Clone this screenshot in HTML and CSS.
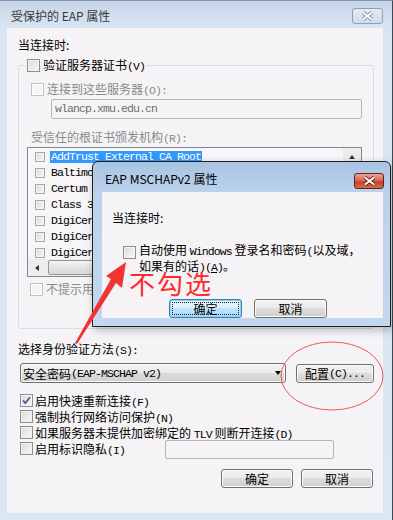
FILE: index.html
```html
<!DOCTYPE html>
<html lang="zh-CN">
<head>
    <meta charset="UTF-8">
    <meta name="viewport" content="width=device-width, initial-scale=1.0">
    <title>受保护的 EAP 属性</title>
    <link rel="stylesheet" href="styles.css">
</head>
<body>
    <div class="window">
        <div class="titlebar">
            <span class="title">受保护的 EAP 属性</span>
            <span class="close-btn inactive">
                <svg width="13" height="10" viewBox="0 0 13 10"><path d="M2 1.5 L11 8.5 M11 1.5 L2 8.5" stroke="#7c8da4" stroke-width="3.6"/><path d="M2 1.5 L11 8.5 M11 1.5 L2 8.5" stroke="#fff" stroke-width="2"/></svg>
            </span>
        </div>

        <div class="client">
            <div class="label">当连接时:</div>

            <fieldset class="group">
                <legend><span class="cb"></span><span>验证服务器证书<span class="m">(V)</span></span></legend>
                <div class="group-body">
                    <div class="row gray"><span class="cb off"></span><span>连接到这些服务器<span class="m">(O):</span></span></div>
                    <div class="textbox server m">wlancp.xmu.edu.cn</div>
                    <div class="label gray trusted">受信任的根证书颁发机构<span class="m">(R):</span></div>

                    <div class="list">
                        <div class="list-items">
                            <div class="item"><span class="cb sm"></span><span class="m selected">AddTrust External CA Root</span></div>
                            <div class="item"><span class="cb sm"></span><span class="m">Baltimore CyberTrust Root</span></div>
                            <div class="item"><span class="cb sm"></span><span class="m">Certum CA</span></div>
                            <div class="item"><span class="cb sm"></span><span class="m">Class 3 Public Primary Certification Authority</span></div>
                            <div class="item"><span class="cb sm"></span><span class="m">DigiCert Assured ID Root CA</span></div>
                            <div class="item"><span class="cb sm"></span><span class="m">DigiCert Global Root CA</span></div>
                            <div class="item"><span class="cb sm"></span><span class="m">DigiCert High Assurance EV Root CA</span></div>
                        </div>
                        <div class="vscroll"><span class="arrow-btn"><span class="tri-up"></span></span></div>
                        <div class="hscroll"><span class="arrow-btn"><span class="tri-left"></span></span><span class="thumb"></span></div>
                        <div class="corner"></div>
                    </div>

                    <div class="row gray prompt"><span class="cb off"></span><span>不提示用户验证新服务器或受信任的证书颁发机构<span class="m">(P)</span>。</span></div>
                </div>
            </fieldset>

            <div class="label method-label">选择身份验证方法<span class="m">(S):</span></div>
            <div class="method-row">
                <div class="select">安全密码<span class="m">(EAP-MSCHAP v2)</span><span class="tri-down"></span></div>
                <div class="btn config">配置<span class="m">(C)...</span></div>
            </div>

            <div class="options">
                <div class="opt">
                    <span class="cb"><svg width="11" height="11" viewBox="0 0 11 11"><polyline points="2,5.5 4.3,8 9,2.2" fill="none" stroke="#4a5f9e" stroke-width="1.8"/></svg></span>
                    <span>启用快速重新连接<span class="m">(F)</span></span>
                </div>
                <div class="opt"><span class="cb"></span><span>强制执行网络访问保护<span class="m">(N)</span></span></div>
                <div class="opt"><span class="cb"></span><span>如果服务器未提供加密绑定的 <span class="m">TLV</span> 则断开连接<span class="m">(D)</span></span></div>
                <div class="opt"><span class="cb"></span><span class="opt-text">启用标识隐私<span class="m">(I)</span></span><span class="textbox identity"></span></div>
            </div>

            <div class="buttons">
                <div class="btn">确定</div>
                <div class="btn">取消</div>
            </div>
        </div>
    </div>

    <!-- janela do MSCHAPv2 por cima -->
    <div class="dialog">
        <div class="dialog-title">
            <span class="title">EAP MSCHAPv2 属性</span>
            <span class="close-btn active">
                <svg width="13" height="10" viewBox="0 0 13 10"><path d="M2 1.5 L11 8.5 M11 1.5 L2 8.5" stroke="#5b1f17" stroke-width="3.6"/><path d="M2 1.5 L11 8.5 M11 1.5 L2 8.5" stroke="#fff" stroke-width="2"/></svg>
            </span>
        </div>
        <div class="dialog-body">
            <div class="label">当连接时:</div>
            <div class="check-row">
                <span class="cb"></span>
                <span class="check-text">自动使用 <span class="m">Windows</span> 登录名和密码<span class="m">(</span>以及域，<br>如果有的话<span class="m">)(<u>A</u>)</span>。</span>
            </div>
            <div class="dialog-buttons">
                <div class="btn default"><span class="focus">确定</span></div>
                <div class="btn">取消</div>
            </div>
        </div>
    </div>

    <!-- anotações em vermelho -->
    <div class="note">不勾选</div>
    <svg class="marks" width="393" height="520" viewBox="0 0 393 520">
        <ellipse cx="332" cy="376" rx="51" ry="34" fill="none" stroke="#f05a5a" stroke-width="1"/>
        <polygon points="126,262 122,288 116,283 77,344 75,343 111,279 106,276" fill="#f03434"/>
    </svg>
</body>
</html>
```

FILE: styles.css
```css
body {
    margin: 0;
    width: 393px;
    height: 520px;
    overflow: hidden;
    font-family: "Noto Sans CJK SC", sans-serif;
    font-size: 12px;
    color: #000;
    background: #dbe7f4;
}
.m {
    font-family: "Liberation Mono", monospace;
    font-size: 11.5px;
    letter-spacing: -0.9px;
}
.window {
    width: 393px;
    height: 520px;
    box-sizing: border-box;
    border-top: 1px solid #8393a8;
    border-right: 1px solid #3f4a57;
    background: linear-gradient(#c6d5e8, #d8e5f3 27px, #dbe7f4);
}
.titlebar {
    height: 27px;
    display: flex;
    align-items: flex-start;
    justify-content: space-between;
    padding: 7px 9px 0 11px;
    box-sizing: border-box;
}
.title {
    line-height: 16px;
    color: #3a3a3a;
}
.close-btn {
    width: 31px;
    height: 16px;
    box-sizing: border-box;
    border-radius: 3px;
    display: flex;
    align-items: center;
    justify-content: center;
}
.close-btn.inactive {
    border: 1px solid #8e9fb6;
    background: linear-gradient(#e3ebf6, #cfdcec);
}
.close-btn.active {
    width: 30px;
    margin-top: 2px;
    border: 1px solid #6a2118;
    background: linear-gradient(#eaa79b, #d5604a 50%, #c4402a 55%, #d46a52);
}
.client {
    margin-left: 7px;
    width: 376px;
    height: 485px;
    box-sizing: border-box;
    padding: 9px 0 0 11px;
    background: #f6f3f6;
}
.label {
    line-height: 16px;
    height: 16px;
}
.gray {
    color: #8a8a8a;
}

/* checkbox */
.cb {
    width: 13px;
    height: 13px;
    flex: none;
    box-sizing: border-box;
    border: 1px solid #8f8f8f;
    background: linear-gradient(135deg, #d9d9d9, #f9f9f9);
    box-shadow: inset 0 0 0 1px #f4f4f4;
    display: flex;
    align-items: center;
    justify-content: center;
}
.cb.off {
    border-color: #c2c2c2;
    background: #f5f5f5;
    box-shadow: inset 0 0 0 1px #fff;
}
.cb.sm {
    width: 10px;
    height: 10px;
    border-color: #a5a5a5;
}

/* grupo */
.group {
    margin: 6px 0 0 0;
    padding: 0;
    width: 356px;
    box-sizing: border-box;
    border: 1px solid #d5dfe5;
    border-radius: 3px;
    min-inline-size: 0;
}
.group legend {
    margin-left: 6px;
    padding: 0 2px;
    height: 13px;
    line-height: 13px;
    display: flex;
    align-items: center;
    gap: 3px;
}
.group-body {
    padding: 11px 0 32px 12px;
}
.row {
    display: flex;
    align-items: center;
    gap: 3px;
    height: 13px;
    line-height: 13px;
    white-space: nowrap;
}
.textbox {
    box-sizing: border-box;
    border: 1px solid #b5b5b5;
    border-radius: 2px;
    background: #f6f3f6;
}
.textbox.server {
    margin: 3px 0 0 20px;
    width: 311px;
    height: 20px;
    line-height: 18px;
    padding-left: 3px;
    color: #6d6d6d;
}
.trusted {
    margin-top: 11px;
    line-height: 14px;
    height: 14px;
}
.prompt {
    margin: 6px 0 0 -1px;
}

/* lista de certificados */
.list {
    margin: 3px 0 0 -4px;
    width: 335px;
    height: 130px;
    box-sizing: border-box;
    border: 1px solid #828790;
    background: #f7f5f7;
    display: grid;
    grid-template-columns: 1fr 18px;
    grid-template-rows: 1fr 17px;
}
.list-items {
    padding-top: 1px;
    overflow: hidden;
}
.item {
    display: flex;
    align-items: center;
    gap: 5px;
    height: 16px;
    padding-left: 7px;
    white-space: nowrap;
}
.item .m {
    padding: 0 1px;
    line-height: 12px;
}
.selected {
    background: #3399ff;
    color: #fff;
}
.vscroll, .hscroll, .corner {
    background: #ececec;
}
.hscroll {
    display: flex;
    align-items: center;
}
.arrow-btn {
    width: 17px;
    height: 17px;
    flex: none;
    display: flex;
    align-items: center;
    justify-content: center;
}
.tri-up {
    border-left: 3.5px solid transparent;
    border-right: 3.5px solid transparent;
    border-bottom: 4px solid #333;
}
.tri-left {
    border-top: 3.5px solid transparent;
    border-bottom: 3.5px solid transparent;
    border-right: 4px solid #333;
}
.tri-down {
    margin-left: auto;
    margin-right: 4px;
    border-left: 3.5px solid transparent;
    border-right: 3.5px solid transparent;
    border-top: 4px solid #000;
}
.thumb {
    margin-left: 3px;
    width: 220px;
    height: 15px;
    box-sizing: border-box;
    border: 1px solid #979797;
    border-radius: 2px;
    background: linear-gradient(#f4f4f4, #e3e3e3 50%, #d7d7d7);
}

/* método */
.method-label {
    margin-top: 12px;
}
.method-row {
    display: flex;
    margin-top: 6px;
    height: 20px;
}
.select {
    margin-left: 2px;
    width: 266px;
    height: 20px;
    box-sizing: border-box;
    padding-left: 2px;
    display: flex;
    align-items: center;
    border: 1px solid #707070;
    border-radius: 3px;
    background: linear-gradient(#f2f2f2, #ebebeb 50%, #dddddd 50%, #cfcfcf);
    box-shadow: inset 0 0 0 1px #fbfbfb;
}
.btn {
    width: 72px;
    height: 19px;
    box-sizing: border-box;
    display: flex;
    align-items: center;
    justify-content: center;
    border: 1px solid #707070;
    border-radius: 3px;
    background: linear-gradient(#f2f2f2, #ebebeb 50%, #dddddd 50%, #cfcfcf);
    box-shadow: inset 0 0 0 1px #fbfbfb;
    white-space: nowrap;
}
.btn.config {
    width: 78px;
    margin: 1px 0 0 10px;
}
.options {
    margin-top: 11px;
}
.opt {
    display: flex;
    align-items: flex-start;
    gap: 2px;
    height: 16px;
    line-height: 13px;
    padding-left: 2px;
    white-space: nowrap;
}
.opt-text {
    width: 128px;
}
.textbox.identity {
    margin-top: -2px;
    width: 169px;
    height: 19px;
}
.buttons {
    display: flex;
    justify-content: flex-end;
    gap: 8px;
    margin-top: 11px;
    padding-right: 10px;
}

/* diálogo */
.dialog {
    position: absolute;
    left: 92px;
    top: 161px;
    width: 299px;
    height: 166px;
    box-sizing: border-box;
    border: 1px solid #202020;
    border-radius: 6px 6px 0 0;
    background: linear-gradient(#a8c3e3, #bbd2ec 30px, #c3d8ef);
    box-shadow: 2px 3px 8px rgba(0, 0, 0, 0.25);
}
.dialog-title {
    height: 30px;
    box-sizing: border-box;
    display: flex;
    align-items: flex-start;
    justify-content: space-between;
    padding: 9px 6px 0 12px;
}
.dialog-title .title {
    color: #000;
}
.dialog-body {
    margin: 0 7px 0 9px;
    height: 126px;
    box-sizing: border-box;
    padding: 18px 0 0 10px;
    background: #f6f3f6;
}
.check-row {
    display: flex;
    align-items: flex-start;
    gap: 3px;
    margin: 17px 0 0 11px;
}
.check-row .cb {
    margin-top: 3px;
}
.check-text {
    line-height: 14px;
    white-space: nowrap;
}
.dialog-buttons {
    display: flex;
    gap: 12px;
    margin: 24px 0 0 57px;
}
.dialog-buttons .btn {
    width: 73px;
}
.btn.default {
    border-color: #3c7fb1;
    box-shadow: inset 0 0 0 1px #8fd2f5;
    background: linear-gradient(#eaf6fd, #d9f0fc 50%, #bee6fd 50%, #a7d9f5);
}
.focus {
    flex: 1;
    align-self: stretch;
    margin: 2px;
    border: 1px dotted #222;
    text-align: center;
    line-height: 11px;
}

/* anotações */
.note {
    position: absolute;
    left: 129px;
    top: 270px;
    font-size: 26px;
    line-height: 26px;
    letter-spacing: 2px;
    color: #ff2b2b;
}
.marks {
    position: absolute;
    left: 0;
    top: 0;
    pointer-events: none;
}
```
